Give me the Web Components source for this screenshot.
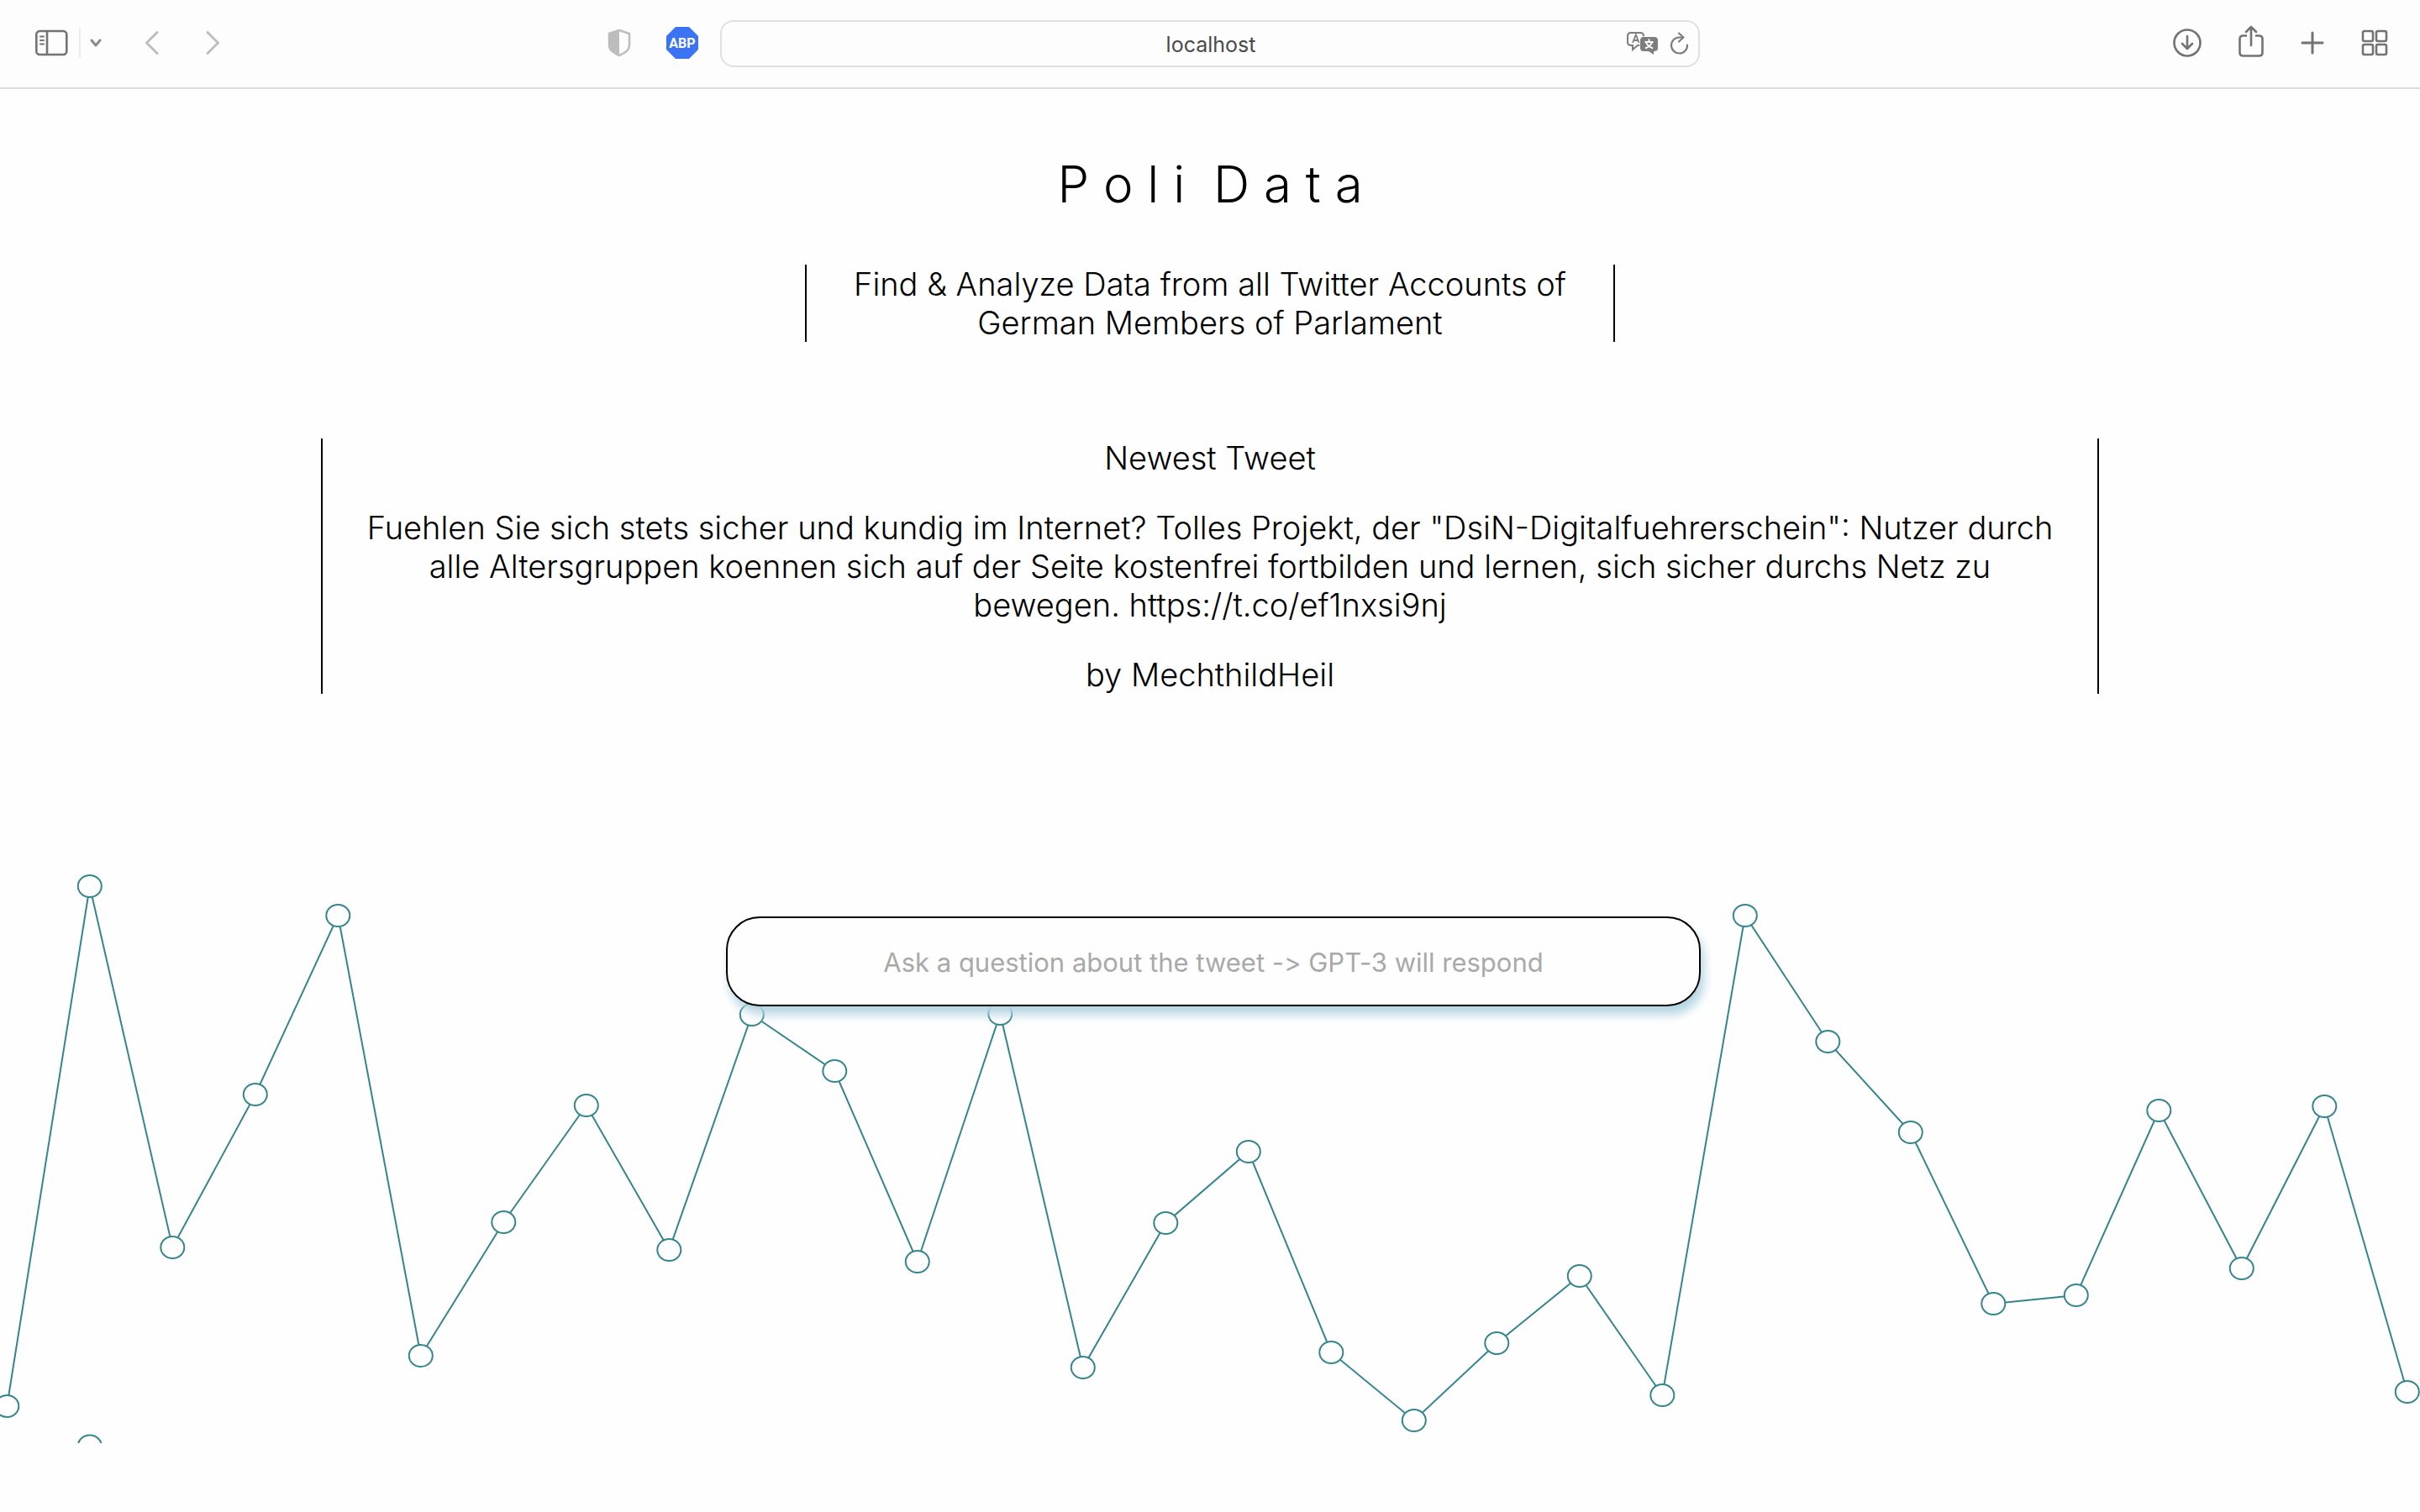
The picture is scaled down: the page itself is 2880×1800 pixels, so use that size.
<!DOCTYPE html>
<html lang="en">
<head>
<meta charset="utf-8">
<title>Poli Data</title>
<style>
body{margin:0;background:#fefefe;font-family:Inter,sans-serif;color:#000}
</style>
</head>
<body>
<poli-app></poli-app>
<script>
class BrowserBar extends HTMLElement{
  constructor(){super();this.attachShadow({mode:'open'}).innerHTML=`
<style>
:host{display:grid;grid-template-columns:1fr 1166px 1fr;align-items:center;height:104px;background:#fdfdfd;border-bottom:2px solid #dcdcdc;color:#737373}
button{background:none;border:0;padding:0;margin:0;color:inherit;display:flex}
svg{display:block;overflow:visible}
.left,.right,.nav,.ext{display:flex;align-items:center}
.left{justify-content:space-between;padding:0 26px 2px 42px}
.sep{width:2px;height:36px;background:#ececec;margin:0 11px 0 13px}
.back{margin-left:52px}.fwd{margin-left:56px}
.ext{gap:42px}
.address{box-sizing:border-box;height:56px;border:2px solid #e0e0e0;border-radius:16px;display:grid;grid-template-columns:1fr auto 1fr;align-items:center;font:25px/32px Inter,sans-serif;color:#4a4a4a}
.host{padding:2px 0 0 2px}
.tools{display:flex;justify-content:flex-end;gap:14px;padding-right:11px;color:#7d7d7d}
.right{justify-content:flex-end;gap:44px;padding:0 38px 2px 0}
</style>
<div class="left">
 <div class="nav">
  <button aria-label="Sidebar"><svg width="39" height="32" fill="none" stroke="currentColor" stroke-width="2.6"><rect x="1.3" y="2" width="36" height="28" rx="4"/><path d="M14 2v28"/><path stroke-width="2" stroke-linecap="round" d="M6 8.500h4M6 13h4M6 17.500h4"/></svg></button>
  <span class="sep"></span>
  <button aria-label="Tab groups"><svg width="14" height="10" fill="none" stroke="#8a8a90" stroke-width="3" stroke-linecap="round" stroke-linejoin="round"><path d="M2 2l5 6 5-6"/></svg></button>
  <button class="back" aria-label="Back"><svg width="16" height="28" fill="none" stroke="#bdbdbd" stroke-width="3" stroke-linecap="round" stroke-linejoin="round"><path d="M14 1.500L1.500 14 14 26.500"/></svg></button>
  <button class="fwd" aria-label="Forward"><svg width="16" height="28" fill="none" stroke="#bdbdbd" stroke-width="3" stroke-linecap="round" stroke-linejoin="round"><path d="M2 1.500L14.500 14 2 26.500"/></svg></button>
 </div>
 <div class="ext">
  <button aria-label="Privacy report"><svg width="28" height="34" fill="none" stroke="#bdbdbd" stroke-width="2.500" stroke-linejoin="round"><path d="M14 2l12 4v14c0 6-7 10-12 12C9 30 2 26 2 20V6z"/><path fill="#bdbdbd" stroke="none" d="M14 1v32C8 30 1 26 1 20V5z"/></svg></button>
  <button aria-label="Adblock Plus"><svg width="38" height="38"><path fill="#3b73f5" d="M11 0h16l11 11v16L27 38H11L0 27V11z"/><text x="19" y="25" text-anchor="middle" font-family="Roboto" font-weight="700" font-size="16" fill="#fff">ABP</text></svg></button>
 </div>
</div>
<div class="address"><span></span><span class="host">localhost</span><div class="tools">
 <button aria-label="Translate"><svg width="38" height="28" fill="none" stroke="currentColor" stroke-width="2"><path d="M16 16h-3l-6 5v-5H5q-4 0-4-4V5q0-4 4-4h11q4 0 4 4v3"/><path stroke-width="1.800" d="M7 13L10.800 3.500 14.600 13M8.500 10h4.600"/><path fill="currentColor" stroke="#fdfdfd" stroke-width="1.500" paint-order="stroke" d="M20 6h13q4 0 4 4v9q0 4-4 4h-1v4l-6-4h-6q-4 0-4-4v-9q0-4 4-4z"/><path stroke="#fff" d="M26.500 8.500v3M21.500 12h10M23 12.500q2 5 8 7M30 12.500q-2 5-8 7"/></svg></button>
 <button aria-label="Reload"><svg width="22" height="28" fill="none" stroke="currentColor" stroke-width="2.200" stroke-linecap="round" stroke-linejoin="round"><path d="M14 6.500H10.500a9.500 9.500 0 1 0 9.500 9"/><path d="M10 1.500l5.500 5-5.500 5"/></svg></button>
</div></div>
<div class="right">
 <button aria-label="Downloads"><svg width="34" height="34" fill="none" stroke="currentColor" stroke-width="2.600" stroke-linecap="round" stroke-linejoin="round"><circle cx="17" cy="17" r="15.500"/><path d="M17 9v15M11 18l6 6 6-6"/></svg></button>
 <button aria-label="Share"><svg width="30" height="42" fill="none" stroke="currentColor" stroke-width="2.600" stroke-linecap="round" stroke-linejoin="round"><path stroke-linecap="butt" d="M10 12.500H5.500q-4 0-4 4v16q0 4 4 4h19q4 0 4-4v-16q0-4-4-4H20"/><path d="M15 24V2M9 8l6-6 6 6"/></svg></button>
 <button aria-label="New tab"><svg width="28" height="28" fill="none" stroke="currentColor" stroke-width="3" stroke-linecap="round"><path d="M14 2v24M2 14h24"/></svg></button>
 <button aria-label="Tab overview"><svg width="32" height="32" fill="none" stroke="currentColor" stroke-width="2.600"><rect x="2" y="2" width="12" height="12" rx="2"/><rect x="18" y="2" width="12" height="12" rx="2"/><rect x="2" y="18" width="12" height="12" rx="2"/><rect x="18" y="18" width="12" height="12" rx="2"/></svg></button>
</div>`}
}
customElements.define('browser-bar',BrowserBar);

class QuoteBox extends HTMLElement{
  constructor(){super();this.attachShadow({mode:'open'}).innerHTML=`
<style>
:host{display:grid;gap:37px;box-sizing:border-box;border:solid #000;border-width:0 2px;padding:0 50px;text-align:center;font-weight:300;font-size:38px;line-height:46px}
::slotted(p){margin:0!important}
</style><slot></slot>`}
}
customElements.define('quote-box',QuoteBox);

class TrendLine extends HTMLElement{
  constructor(){super();
    const ys=[1674,1055,1485,1303,1090,1614,1455,1316,1488,1208,1275,1502,1207,1628,1456,1371,1610,1691,1599,1519,1661,1090,1240,1348,1552,1542,1322,1510,1317,1657];
    const pts=ys.map((y,i)=>[8.3+98.5*i,y-1018]);
    const dot=p=>`<ellipse cx="${p[0]}" cy="${p[1]}" rx="14" ry="13"/>`;
    this.attachShadow({mode:'open'}).innerHTML=`
<style>:host{display:block}svg{display:block;width:100%;height:auto}</style>
<svg viewBox="0 0 2880 700" fill="#fefefe" stroke="#35858e" stroke-width="2" aria-hidden="true"><polyline fill="none" points="${pts.map(p=>p.join()).join(' ')}"/>${pts.map(dot).join('')}${dot([106.800,703.500])}</svg>`}
}
customElements.define('trend-line',TrendLine);

class AskBox extends HTMLElement{
  constructor(){super();this.attachShadow({mode:'open'}).innerHTML=`
<style>
:host{display:block}
input{display:block;box-sizing:border-box;width:100%;height:107px;border:2px solid #000;border-radius:40px;background:#fefefe;box-shadow:4px 10px 12px 0 #b5d5e2;text-align:center;font:31px/40px Inter,sans-serif;font-variant-ligatures:no-contextual;color:#000;padding:2px 20px 0;outline:0}
input::placeholder{color:#a9a9a9;opacity:1}
</style><input type="text" aria-label="Question" placeholder="Ask a question about the tweet -> GPT-3 will respond">`}
}
customElements.define('ask-box',AskBox);

class PoliApp extends HTMLElement{
  constructor(){super();this.attachShadow({mode:'open'}).innerHTML=`
<style>
:host{display:block}
main{display:flex;flex-direction:column;align-items:center}
h1{margin:77px 0 0;font-weight:300;font-size:60px;line-height:72px}
.intro{margin-top:60px;width:964px}
.tweet{margin-top:115px;width:2116px}
.stage{position:relative;margin-top:192px;width:100%}
.ask{position:absolute;top:73px;left:8px;right:0;margin:0 auto;width:1160px}
</style>
<browser-bar></browser-bar>
<main>
<h1>P o l i &nbsp;D a t a</h1>
<quote-box class="intro"><p>Find &amp; Analyze Data from all Twitter Accounts of German Members of Parlament</p></quote-box>
<quote-box class="tweet"><p>Newest Tweet</p><p>Fuehlen Sie sich stets sicher und kundig im Internet? Tolles Projekt, der "DsiN-Digitalfuehrerschein": Nutzer durch alle Altersgruppen koennen sich auf der Seite kostenfrei fortbilden und lernen, sich sicher durchs Netz zu bewegen. https://t.co/ef1nxsi9nj</p><p>by MechthildHeil</p></quote-box>
<div class="stage"><trend-line></trend-line><ask-box class="ask"></ask-box></div>
</main>`}
}
customElements.define('poli-app',PoliApp);
</script>
</body>
</html>
